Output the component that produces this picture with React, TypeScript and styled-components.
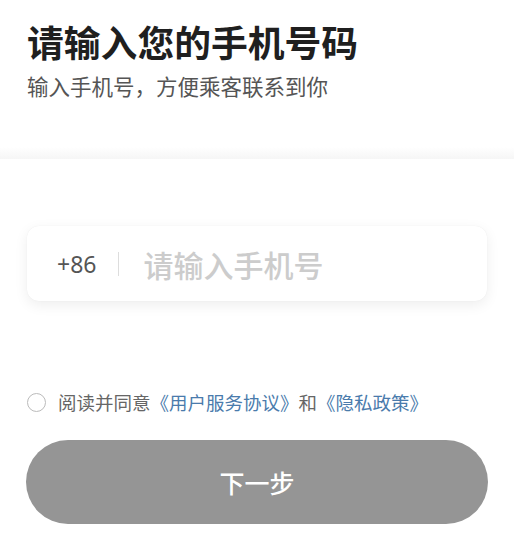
import React from 'react';
import styled, { createGlobalStyle } from 'styled-components';

const GlobalStyle = createGlobalStyle`
  body {
    margin: 0;
    background: #ffffff;
    font-family: "Noto Sans CJK SC", "Noto Sans", sans-serif;
  }
`;

const Page = styled.div`
  width: 514px;
  height: 545px;
  overflow: hidden;
  background: #ffffff;
`;

const Header = styled.div`
  padding: 16px 27px 0;
  height: 130px;
  box-sizing: border-box;
`;

const Title = styled.h1`
  margin: 0;
  font-size: 36.8px;
  font-weight: 700;
  line-height: 50px;
  color: #1f1f1f;
`;

const Subtitle = styled.p`
  margin: 5px 0 0;
  font-size: 21.5px;
  line-height: 30px;
  color: #555555;
`;

const Band = styled.div`
  height: 12px;
  margin-top: 17px;
  background: linear-gradient(#ffffff, #f6f6f6);
`;

const Body = styled.div`
  padding: 67px 27px 0;
`;

const PhoneCard = styled.div`
  display: flex;
  align-items: center;
  height: 75px;
  padding: 0 30px;
  border-radius: 12px;
  background: #ffffff;
  box-shadow: 0 4px 14px rgba(0, 0, 0, 0.07), 0 0 1px rgba(0, 0, 0, 0.08);
`;

const Code = styled.span`
  font-family: "Noto Sans", "Noto Sans CJK SC", sans-serif;
  font-size: 23px;
  color: #555555;
`;

const Divider = styled.span`
  width: 1px;
  height: 24px;
  margin: 0 24px 0 22px;
  background: #dddddd;
`;

const Placeholder = styled.span`
  font-size: 30px;
  font-weight: 500;
  color: #cccccc;
`;

const AgreeRow = styled.div`
  display: flex;
  align-items: center;
  margin-top: 88px;
  font-size: 18.5px;
  color: #666666;
`;

const Radio = styled.span`
  width: 17px;
  height: 17px;
  border: 1px solid #bbbbbb;
  border-radius: 50%;
  margin-right: 12px;
`;

const Link = styled.span`
  color: #4a7bac;
`;

const NextButton = styled.button`
  display: block;
  width: 462px;
  height: 84px;
  margin: 25px 0 0 -1px;
  border: none;
  border-radius: 42px;
  background: #959595;
  color: #ffffff;
  font-family: "Noto Sans CJK SC", sans-serif;
  font-size: 25px;
  font-weight: 500;
`;

export default function App() {
  return (
    <Page>
      <GlobalStyle />
      <Header>
        <Title>请输入您的手机号码</Title>
        <Subtitle>输入手机号，方便乘客联系到你</Subtitle>
      </Header>
      <Band />
      <Body>
        <PhoneCard>
          <Code>+86</Code>
          <Divider />
          <Placeholder>请输入手机号</Placeholder>
        </PhoneCard>
        <AgreeRow>
          <Radio />
          阅读并同意<Link>《用户服务协议》</Link>和<Link>《隐私政策》</Link>
        </AgreeRow>
        <NextButton>下一步</NextButton>
      </Body>
    </Page>
  );
}
